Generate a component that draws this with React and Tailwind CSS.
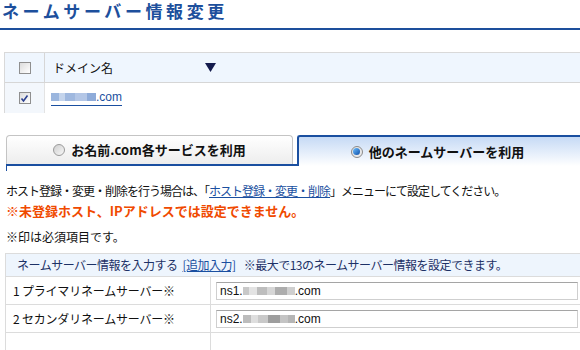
import React from "react";

const JP = { fontFamily: '"Noto Sans CJK JP", "Noto Sans", sans-serif' };

function Checkbox({ checked }) {
  return (
    <div className="w-[12px] h-[12px] border border-[#8f8f8f] bg-gradient-to-br from-[#dcdcdc] to-white flex items-center justify-center">
      {checked && (
        <svg width="9" height="9" viewBox="0 0 9 9">
          <path d="M1.5 4.5 L3.5 7 L7.5 1.5" stroke="#2a3f8f" strokeWidth="1.6" fill="none" />
        </svg>
      )}
    </div>
  );
}

function Radio({ on }) {
  return on ? (
    <div className="w-[12px] h-[12px] rounded-full border border-[#8a8a8a] bg-[#e8e8e8] flex items-center justify-center">
      <div className="w-[7px] h-[7px] rounded-full bg-gradient-to-br from-[#6fc0ff] to-[#0a4ea8]" />
    </div>
  ) : (
    <div className="w-[12px] h-[12px] rounded-full border border-[#9a9a9a] bg-gradient-to-br from-[#cfcfcf] to-[#f8f8f8]" />
  );
}

function Blur({ blocks }) {
  return (
    <span className="inline-flex items-center blur-[0.6px]">
      {blocks.map((b, i) => (
        <span key={i} className="inline-block h-[8px]" style={{ width: b[0], background: b[1] }} />
      ))}
    </span>
  );
}

export default function App() {
  return (
    <div className="w-[580px] h-[350px] overflow-hidden bg-white text-[#222]" style={JP}>
      {/* Title */}
      <div className="h-[28px] pl-[2px] pt-[1px]">
        <div className="text-[17px] leading-[20px] font-bold tracking-[3.6px] text-[#1d4f9c] whitespace-nowrap">ネームサーバー情報変更</div>
      </div>
      <div className="h-[2px] bg-[#1d4f9c]" />

      {/* Domain table */}
      <div className="mt-[22px] ml-[4px] border-t border-l border-[#d9d9d9]">
        <div className="flex h-[30px] bg-[#eff6fe] border-b border-[#d6d6d6]">
          <div className="w-[40px] border-r border-[#d6d6d6] flex items-center justify-center">
            <Checkbox />
          </div>
          <div className="flex items-center pl-[8px] text-[12px] text-[#111] w-[160px]">ドメイン名</div>
          <div className="flex items-center text-[12px] text-[#141b4d]">
            <svg width="11" height="9" viewBox="0 0 11 9">
              <path d="M0 0 H11 L5.5 9 Z" fill="#141b4d" />
            </svg>
          </div>
        </div>
        <div className="flex h-[30px]">
          <div className="w-[40px] bg-[#f3f7fc] border-r border-[#e3e3e3] flex items-center justify-center">
            <Checkbox checked />
          </div>
          <div className="flex items-center pl-[6px] text-[12px]">
            <span className="inline-flex items-center border-b border-[#1a4fa0] pb-[1px] leading-[13px]">
              <Blur blocks={[[8, "#9bb6de"], [6, "#c4d4ec"], [10, "#9fb8df"], [12, "#b3c6e6"], [9, "#8eabd9"]]} />
              <span className="text-[#1a4fa0] text-[12px]" style={{ fontFamily: '"Liberation Sans", sans-serif' }}>.com</span>
            </span>
          </div>
        </div>
      </div>

      {/* Tabs */}
      <div className="mt-[22px] ml-[6px] flex items-end">
        <div className="w-[291px] border-b-2 border-[#1a4fa0]">
          <div className="w-[287px] h-[29px] border border-b-0 border-[#c4c4c4] rounded-t-[4px] bg-gradient-to-b from-white to-[#ededed] flex items-center justify-center gap-[6px]">
            <Radio />
            <span className="text-[13px] font-bold text-[#111] whitespace-nowrap">お名前.com各サービスを利用</span>
          </div>
        </div>
        <div className="flex-1 h-[31px] border-l-2 border-t-2 border-[#1a4fa0] rounded-tl-[3px] bg-gradient-to-b from-[#c6daf5] to-white flex items-center justify-center gap-[6px] pr-[4px]">
          <Radio on />
          <span className="text-[13px] font-bold text-[#111] whitespace-nowrap">他のネームサーバーを利用</span>
        </div>
      </div>
      <div className="ml-[6px] w-[1px] h-[5px] bg-[#1a4fa0]" />

      {/* Messages */}
      <div className="mt-[12px] pl-[6px] text-[12px] leading-[16px] tracking-[-1px] text-[#111] whitespace-nowrap">
        ホスト登録・変更・削除を行う場合は、「<span className="text-[#1a4fa0] underline">ホスト登録・変更・削除</span>」メニューにて設定してください。
      </div>
      <div className="pl-[6px] mt-[3px] text-[13px] leading-[17px] font-bold text-[#f04a00] whitespace-nowrap">※未登録ホスト、IPアドレスでは設定できません。</div>
      <div className="pl-[6px] mt-[10px] text-[12px] leading-[16px] text-[#111]">※印は必須項目です。</div>

      {/* Name server table */}
      <div className="mt-[8px] ml-[5px] border-t border-l border-[#dcdcdc]">
        <div className="h-[23px] bg-[#eef5fd] border-b border-[#dcdcdc] flex items-center pl-[11px] text-[12px] tracking-[-0.5px] text-[#1d3166] whitespace-nowrap">
          ネームサーバー情報を入力する<span className="ml-[5px] text-[#1a4fa0] underline">[追加入力]</span><span className="ml-[8px]">※最大で13のネームサーバー情報を設定できます。</span>
        </div>
        {[
          ["1 プライマリネームサーバー※", "ns1.", [[6, "#c8c8c8"], [8, "#e3e3e3"], [10, "#bdbdbd"], [8, "#d6d6d6"], [12, "#adadad"], [8, "#cfcfcf"]]],
          ["2 セカンダリネームサーバー※", "ns2.", [[8, "#bcbcbc"], [7, "#dedede"], [10, "#c9c9c9"], [12, "#9e9e9e"], [8, "#c4c4c4"], [7, "#b5b5b5"]]],
        ].map(([label, pre, blocks]) => (
          <div key={label} className="flex h-[28px] border-b border-[#dcdcdc]">
            <div className="w-[205px] border-r border-[#dcdcdc] flex items-center pl-[7px] text-[12px] tracking-[-0.2px] text-[#111] whitespace-nowrap">
              {label}
            </div>
            <div className="flex-1 flex items-center pl-[5px] pr-[2px]">
              <div
                className="w-full h-[18px] border border-[#cfcfcf] border-t-[#a5a5a5] bg-white flex items-center pl-[3px] text-[12px] text-[#111]"
                style={{ fontFamily: '"Liberation Sans", sans-serif' }}
              >
                {pre}
                <Blur blocks={blocks} />
                .com
              </div>
            </div>
          </div>
        ))}
        <div className="flex h-[28px]">
          <div className="w-[205px] border-r border-[#dcdcdc]" />
        </div>
      </div>
    </div>
  );
}
